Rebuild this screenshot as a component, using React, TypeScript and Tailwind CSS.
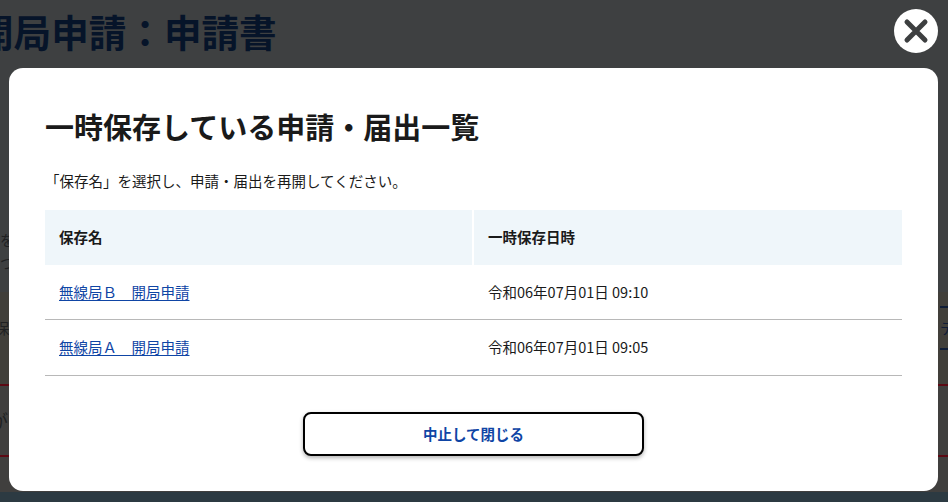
import React from "react";

const font = { fontFamily: '"Noto Sans CJK JP", "Noto Sans", sans-serif' };

const rows = [
  { name: "無線局Ｂ　開局申請", date: "令和06年07月01日 09:10" },
  { name: "無線局Ａ　開局申請", date: "令和06年07月01日 09:05" },
];

export default function App() {
  return (
    <div
      style={font}
      className="relative h-[502px] w-[948px] overflow-hidden bg-[#9ba0a2] text-[#1a1a1a]"
    >
      {/* Page behind the dialog */}
      <div className="flex h-full flex-col text-[#4e5255]">
        <h1 className="ml-[-24px] mt-[5px] h-[224px] shrink-0 whitespace-nowrap text-[37.6px] font-bold leading-[52px] text-[#0f3468]">
          開局申請：申請書
        </h1>
        <div className="h-[23px] shrink-0 text-[14.4px] leading-[22px]">を</div>
        <div className="h-[40px] shrink-0 text-[14.4px] leading-[22px]">つ</div>
        <div className="flex h-[92px] shrink-0 items-center justify-between bg-[#a29d91] pb-[20px]">
          <span className="ml-[-5px] text-[14.4px]">保</span>
          <span className="ml-auto mr-[-6px] flex h-[44px] w-[14px] items-center border-y-2 border-y-[#2a4a8a] text-[14.4px] text-[#2a4a8a]">
            テ
          </span>
        </div>
        <div className="h-[2px] shrink-0 bg-[#e61932]" />
        <div className="flex h-[69px] shrink-0 items-center bg-[#a09d9b] text-[18px]">
          <span className="ml-[-10px]">が</span>
        </div>
        <div className="h-[2px] shrink-0 bg-[#e61932]" />
        <div className="h-[35px] shrink-0 bg-[#a09d9b]" />
        <div className="min-h-0 flex-1 bg-[#6e91a5]" />
      </div>

      {/* Overlay */}
      <div className="absolute inset-0 bg-[#000000]/60" />

      {/* Close button */}
      <button className="absolute left-[894px] top-[9px] flex h-[44px] w-[44px] items-center justify-center rounded-full bg-white">
        <svg width="30" height="30" viewBox="0 0 30 30" fill="none">
          <path
            d="M6 6 L24 24 M24 6 L6 24"
            stroke="#3d3f40"
            strokeWidth="5"
            strokeLinecap="round"
          />
        </svg>
      </button>

      {/* Dialog */}
      <div className="absolute left-[9px] top-[68px] h-[423px] w-[929px] rounded-[14px] bg-white px-[36px]">
        <h2 className="mt-[37px] text-[29px] font-bold leading-[42px]">
          一時保存している申請・届出一覧
        </h2>
        <p className="mt-[23px] text-[14.5px] leading-[22px]">
          「保存名」を選択し、申請・届出を再開してください。
        </p>
        <div className="mt-[18px] text-[14.5px]">
          <div className="flex h-[54.5px] gap-[2px] font-bold">
            <div className="flex w-[427px] items-center bg-[#eff6fa] px-[14px]">保存名</div>
            <div className="flex flex-1 items-center bg-[#eff6fa] px-[14px]">一時保存日時</div>
          </div>
          {rows.map((r) => (
            <div key={r.name} className="flex h-[55.5px] gap-[2px] border-b border-b-[#b8b8b8]">
              <div className="flex w-[427px] items-center px-[14px]">
                <a href="#" className="text-[#0f45a5] underline underline-offset-2">
                  {r.name}
                </a>
              </div>
              <div className="flex flex-1 items-center px-[14px]">{r.date}</div>
            </div>
          ))}
        </div>
        <div className="mt-[36.5px] flex justify-center">
          <button className="h-[44px] w-[341px] rounded-[8px] border-2 border-black bg-white text-[14.5px] font-bold text-[#0f45a5] shadow-[0_2px_4px_rgba(0,0,0,0.3)]">
            中止して閉じる
          </button>
        </div>
      </div>
    </div>
  );
}
